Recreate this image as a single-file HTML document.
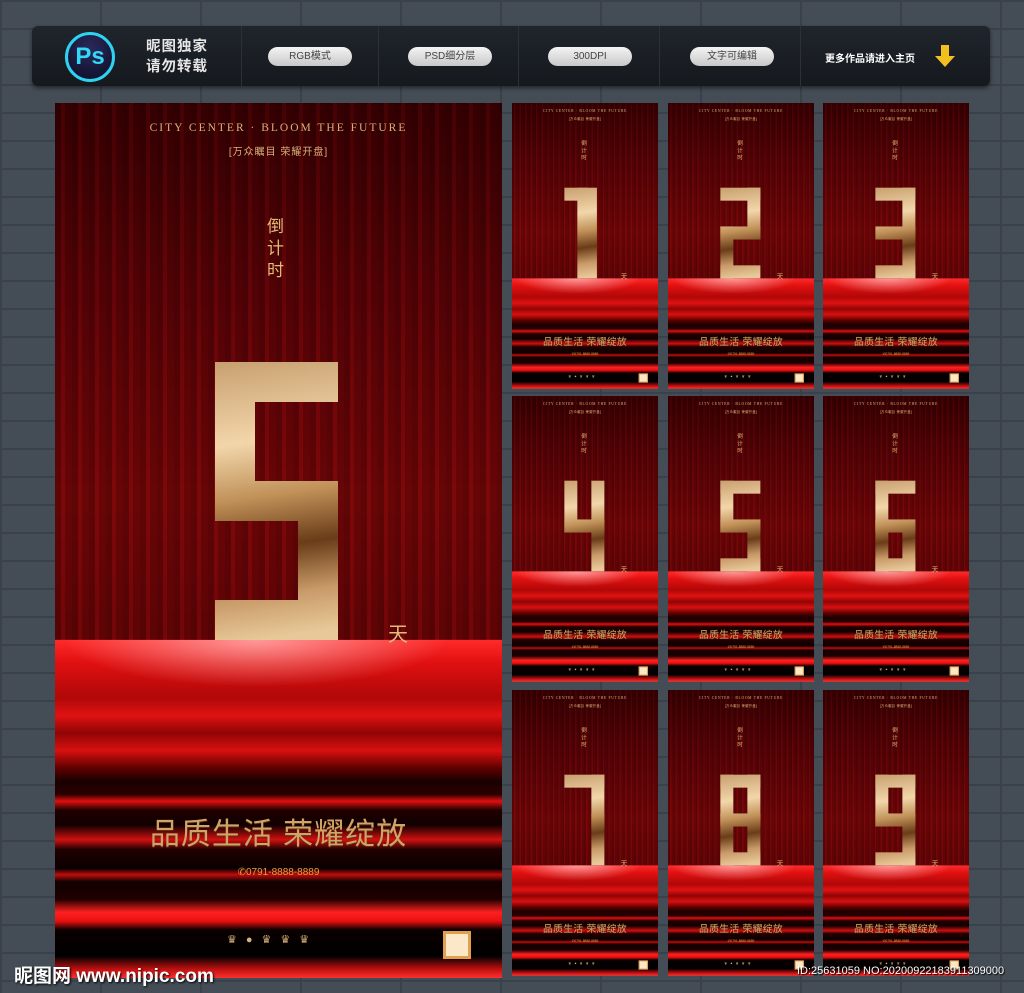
<!DOCTYPE html>
<html><head><meta charset="utf-8">
<style>
*{margin:0;padding:0;box-sizing:border-box}
body{width:1024px;height:993px;overflow:hidden;position:relative;font-family:"Liberation Sans","Noto Sans CJK SC",sans-serif;
background-color:#444c56;
background-image:linear-gradient(#3a414a 2px,transparent 2px),linear-gradient(90deg,#3a414a 2px,transparent 2px);
background-size:100px 28px,100px 56px;}
.hdr{position:absolute;left:32px;top:26px;width:958px;height:60px;background:linear-gradient(#20252c,#15191e);border-radius:6px;box-shadow:0 2px 4px rgba(0,0,0,.5)}
.ps{position:absolute;left:33px;top:6px;width:50px;height:50px;border-radius:50%;border:3px solid #2ed3f2;background:radial-gradient(circle at 50% 30%,#2a2a5a,#0c0c26);color:#31d8f8;font-size:24px;text-align:center;line-height:43px;font-weight:bold}
.t2{position:absolute;left:114px;top:11px;color:#e6e6e6;font-size:14.5px;line-height:20px;font-weight:bold;letter-spacing:1px}
.pill{position:absolute;top:21px;height:19px;width:84px;border-radius:10px;background:linear-gradient(#f4f4f4,#c8c8c8);color:#444;font-size:10px;line-height:19px;text-align:center}
.sep{position:absolute;top:0;width:1px;height:60px;background:#2c3138}
.more{position:absolute;left:793px;top:24px;color:#fff;font-size:10px;font-weight:bold}
.poster{position:absolute;left:0;top:0;width:447px;height:875px;overflow:hidden;transform-origin:0 0;
background:linear-gradient(#3a0002 0%,#5a0206 20%,#760608 45%,#6a0406 61.3%,
#ff2a2a 61.4%,#e01010 64%,#b00808 68%,#e01212 70%,#900404 72%,#d81010 74%,#600000 76%,#1a0000 77.5%,#2a0000 79%,#e01010 79.8%,#200000 80.8%,#100000 82.5%,#d01010 84.2%,#200000 85.3%,#0a0000 87.5%,#c00c0c 88.2%,#100000 89%,#200000 91%,#ff2020 92.5%,#e81010 93.5%,#0a0000 94.5%,#000 97.5%,#c01010 99%,#ff3030 100%)}
.cur{position:absolute;left:0;top:0;width:447px;height:537px;background:repeating-linear-gradient(90deg,rgba(0,0,0,.2) 0 6px,rgba(255,40,40,.05) 6px 10px,rgba(0,0,0,.12) 10px 17px)}
.glow{position:absolute;left:0;top:537px;width:447px;height:60px;background:radial-gradient(ellipse at 45% 0,rgba(255,200,200,.7),rgba(255,40,40,0) 55%)}
.ttl{position:absolute;top:19px;width:447px;text-align:center;color:#d9b27a;font-family:"Liberation Serif",serif;font-size:11.5px;letter-spacing:2px}
.sub{position:absolute;top:40px;width:447px;text-align:center;color:#d9b27a;font-size:10px;letter-spacing:1px}
.djs{position:absolute;left:212px;top:113px;width:20px;color:#e6b978;font-size:17px;line-height:22px}
.dig{position:absolute;left:160px;top:259px}
.tian{position:absolute;left:333px;top:515px;color:#e6b978;font-size:20px}
.slg{position:absolute;top:706px;width:447px;text-align:center;color:#d0a468;font-size:30px;letter-spacing:1px;text-shadow:0 1px 0 #5a3010}
.ph{position:absolute;top:764px;width:447px;text-align:center;color:#e6a040;font-size:10px}
.ic{position:absolute;top:830px;left:172px;color:#d9b27a;font-size:11px;letter-spacing:9px}
.qr{position:absolute;left:388px;top:828px;width:28px;height:28px;background:#fbe8c8;border:3px solid #e0a050}
.wm{position:absolute;left:14px;top:961px;color:#fff;font-size:19px;font-weight:bold;text-shadow:1px 1px 2px #000}
.id{position:absolute;left:797px;top:965px;color:#fff;font-size:11px;text-shadow:1px 1px 1px #000}
</style></head><body>
<div class="hdr">
<div class="ps">Ps</div>
<div class="t2">昵图独家<br>请勿转载</div>
<div class="sep" style="left:209px"></div><div class="sep" style="left:346px"></div><div class="sep" style="left:486px"></div><div class="sep" style="left:627px"></div><div class="sep" style="left:768px"></div>
<div class="pill" style="left:236px">RGB模式</div>
<div class="pill" style="left:376px">PSD细分层</div>
<div class="pill" style="left:516px">300DPI</div>
<div class="pill" style="left:658px">文字可编辑</div>
<div class="more">更多作品请进入主页</div>
<svg style="position:absolute;left:903px;top:19px" width="20" height="22"><path d="M6 0h8v11h6L10 22 0 11h6z" fill="#f4c020"/></svg>
</div>
<div id="wrap"></div>
<div class="wm">昵图网 www.nipic.com</div>
<div class="id">ID:25631059 NO:20200922183911309000</div>
<script>
var S={t:[0,0,123,40],m:[0,119,123,40],b:[0,238,123,40],lu:[0,0,40,159],ru:[83,0,40,159],ll:[0,119,40,159],rl:[83,119,40,159]};
var D={1:null,2:['t','ru','m','ll','b'],3:['t','ru','m','rl','b'],4:['lu','ru','m','rl'],5:['t','lu','m','rl','b'],6:['t','lu','m','ll','rl','b'],7:['t','ru','rl'],8:['t','lu','ru','m','ll','rl','b'],9:['t','lu','ru','m','rl','b']};
var cnt=0;
function dig(n){var r='';cnt++;if(n==1){r='<rect x="40" y="0" width="60" height="278"/><rect x="0" y="0" width="70" height="40"/>';}else D[n].forEach(function(k){var s=S[k];r+='<rect x="'+s[0]+'" y="'+s[1]+'" width="'+s[2]+'" height="'+s[3]+'"/>';});
var id='g'+cnt;
return '<svg class="dig" width="123" height="278"><defs><linearGradient id="'+id+'" gradientUnits="userSpaceOnUse" x1="0" y1="0" x2="40" y2="278"><stop offset="0" stop-color="#c8a070"/><stop offset=".3" stop-color="#f2d6aa"/><stop offset=".5" stop-color="#c09058"/><stop offset=".68" stop-color="#6a3c18"/><stop offset=".85" stop-color="#c89a68"/><stop offset="1" stop-color="#e8c898"/></linearGradient></defs><g fill="url(#'+id+')">'+r+'</g></svg>';}
function poster(n,x,y,s){return '<div class="poster" style="left:'+x+'px;top:'+y+'px;transform:scale('+s+')"><div class="cur"></div><div class="glow"></div><div class="ttl">CITY CENTER · BLOOM THE FUTURE</div><div class="sub">[万众瞩目 荣耀开盘]</div><div class="djs">倒计时</div>'+dig(n)+'<div class="tian">天</div><div class="slg">品质生活 荣耀绽放</div><div class="ph">✆0791-8888-8889</div><div class="ic">♛●♛♛♛</div><div class="qr"></div></div>';}
var h=poster(5,55,103,1);var xs=[512,668,823],ys=[103,396,690];
for(var i=0;i<9;i++)h+=poster(i+1,xs[i%3],ys[Math.floor(i/3)],0.3266);
document.getElementById('wrap').innerHTML=h;
</script>
</body></html>
